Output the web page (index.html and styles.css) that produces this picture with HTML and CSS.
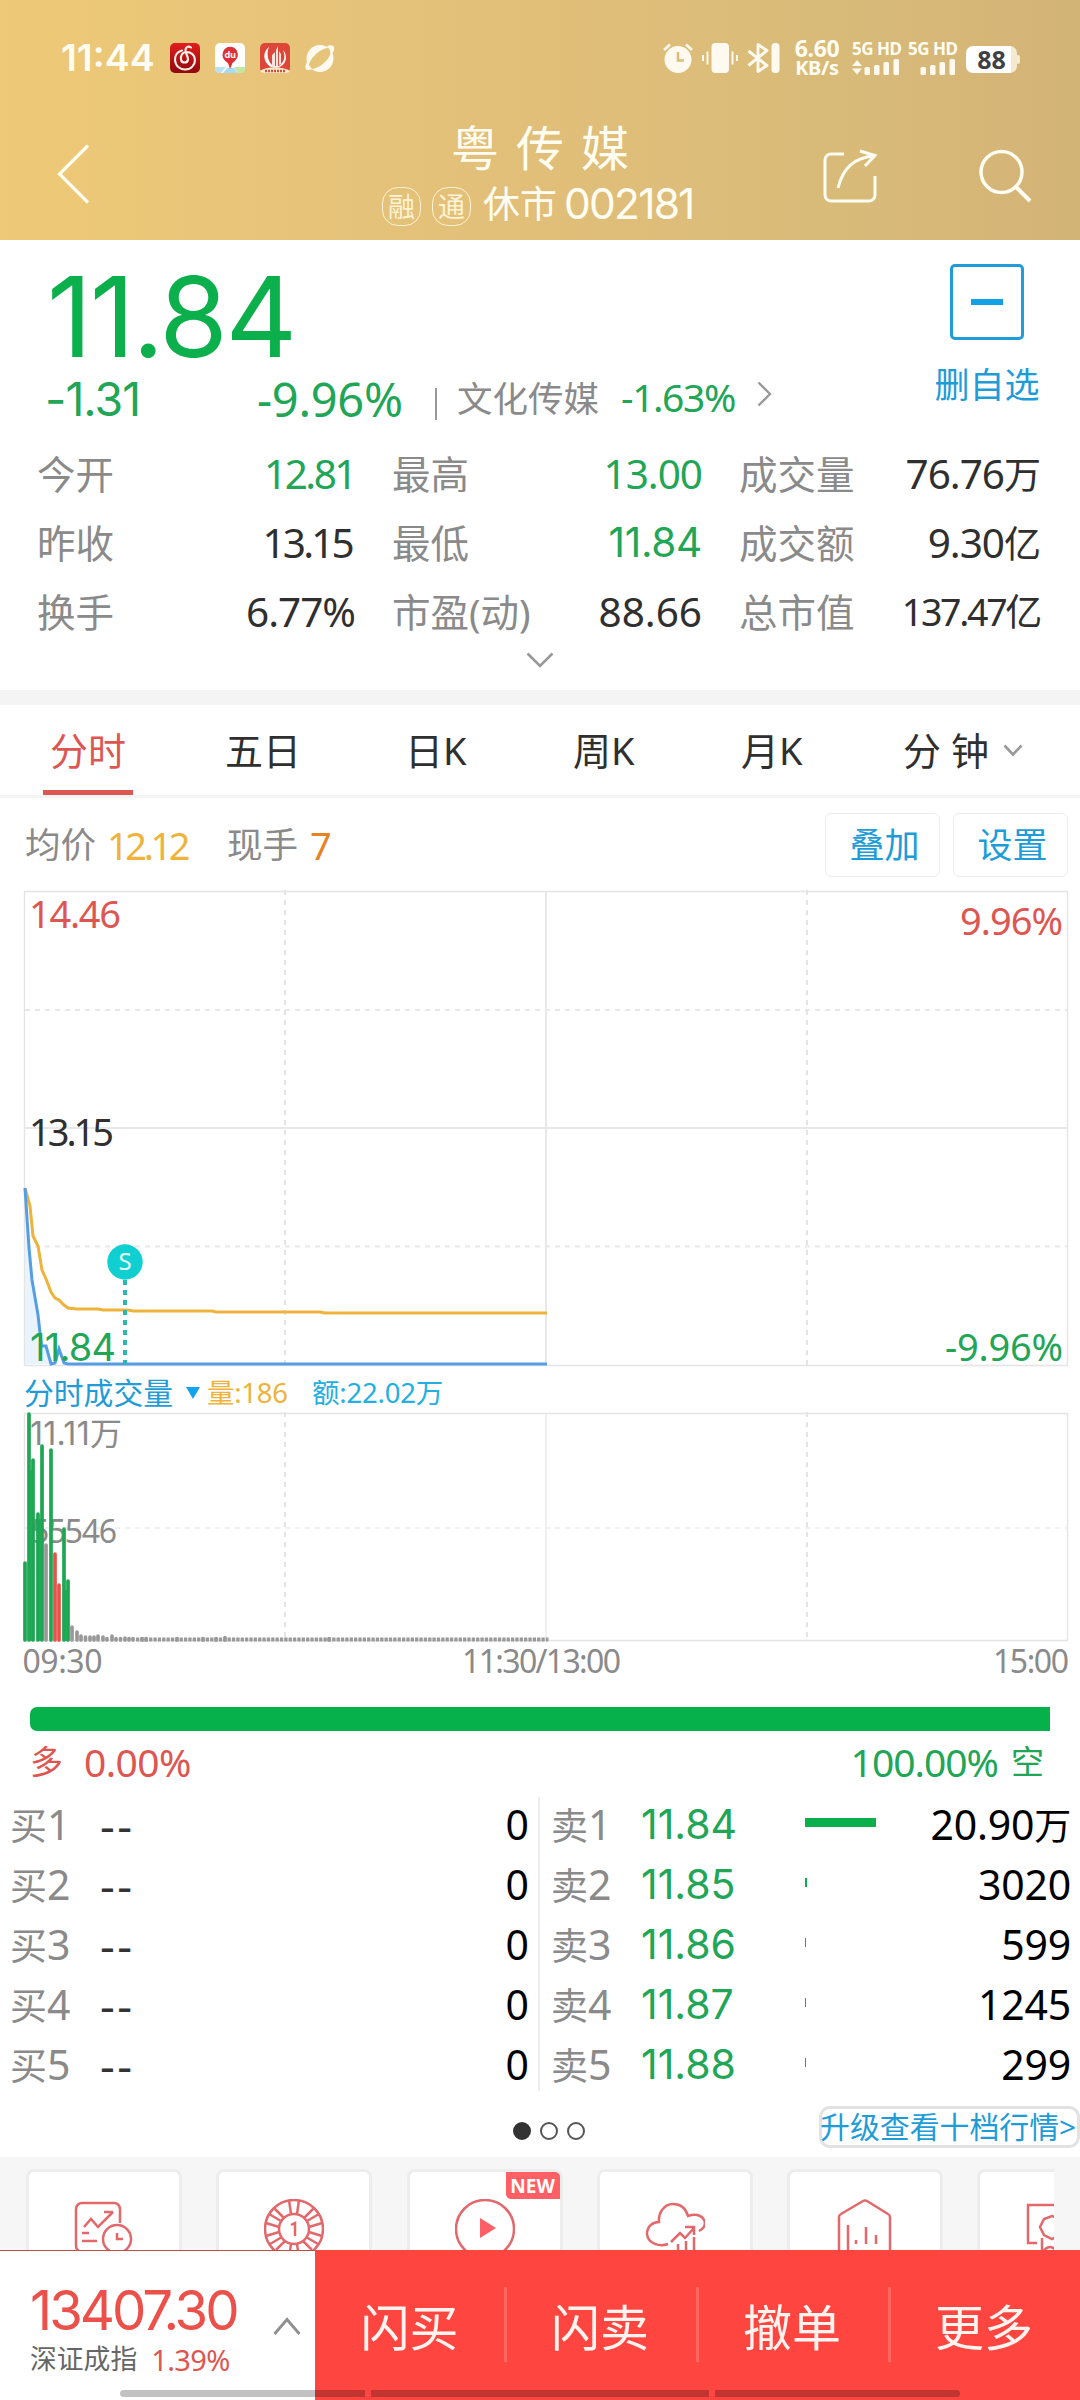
FILE: index.html
```html
<!DOCTYPE html>
<html lang="zh-CN">
<head>
<meta charset="utf-8">
<title>粤传媒 002181</title>
<link rel="stylesheet" href="styles.css">
</head>
<body>
<header class="header">
  <div class="status">
    <span class="clock">11:44</span>
    <svg class="app" viewBox="0 0 30 30"><defs><linearGradient id="nm" x1="0" y1="0" x2="0" y2="1"><stop offset="0" stop-color="#e31d1d"/><stop offset="1" stop-color="#8e0a0c"/></linearGradient></defs><rect width="30" height="30" rx="5" fill="url(#nm)"/><path d="M12 7.500C7 9 4.800 13 5 17c.4 6 5 9.500 10.200 9.500C21 26.500 25 22 25 17c0-5-4-8-8.500-8C12 9 10.500 13 11 16.500c.5 4 6.500 4 7 0 .2-3-3-7-2.500-10 .4-3 3.500-3.500 5.500-2" fill="none" stroke="#fff0ea" stroke-width="2.100" stroke-linecap="round"/></svg>
    <svg class="app" viewBox="0 0 30 30"><rect width="30" height="30" rx="5" fill="#fff"/><path d="M0 24h11l-5 6H4a4 4 0 0 1-4-4z" fill="#b9e1f1"/><path d="M19 24h11v2a4 4 0 0 1-4 4h-3z" fill="#c5e5a5"/><path d="M12 25h7l4 5H8z" fill="#a8dcf4"/><path d="M15 26l-2-6C9 17 7.500 15 7.500 11.500a7.700 7.700 0 0 1 15.400 0c0 3.500-2 5.500-5.400 8.500z" fill="#dd2f35"/><text x="15.200" y="14.500" text-anchor="middle" class="du">du</text></svg>
    <svg class="app" viewBox="0 0 30 30"><rect width="30" height="30" rx="5" fill="#dd4638"/><path d="M9 4C1 10 4 22 13 24.500h5C27 22 28 12 23 7c3 7 1 12-4 16h-6C8 19 6 11 9 4z" fill="#fff"/><path d="M12 24V12l3-3v15zM16 23V7l2-4v20zM19 22V8l2 3v10z" fill="#ffe4de"/><path d="M0 28c7-5 22-5 30 0a5 5 0 0 1-4 2H4a5 5 0 0 1-4-2z" fill="#fbe9c9"/><path d="M5 28h20" stroke="#cf5243" stroke-width="2.500" stroke-dasharray="2 1"/></svg>
    <svg class="app" viewBox="0 0 30 30"><circle cx="15" cy="15.500" r="13.500" fill="#fffaf0"/><path d="M2 23C2 10 14 3 25 5c3 0 3 3 2 4C25 22 15 28 5 26c-2 0-3-1-3-3z" fill="#fffaf0"/><ellipse cx="15" cy="15.500" rx="14" ry="6" transform="rotate(-42 15 15.500)" fill="#e6c47a"/><path d="M22 3c3-1 6-1 7 1 1 3-1 6-4 9 1-4 0-7-3-10zM3 18c-3 3-3 7-2 8 1 2 4 1 6 0-2-2-4-5-4-8z" fill="#fffaf0"/></svg>
    <span class="fill"></span>
    <svg class="s-alarm" viewBox="0 0 30 30"><path d="M1 7l6-5.500M29 7l-6-5.500" stroke="#fffaf0" stroke-width="2.600"/><circle cx="15" cy="16.500" r="13.500" fill="#fffaf0"/><path d="M15 9v8.500h6" fill="none" stroke="#dcbd7a" stroke-width="2.600"/></svg>
    <svg class="s-vib" viewBox="0 0 36 30"><rect x="9.500" width="17.500" height="30" rx="4" fill="#fffaf0"/><path d="M1 12v6M5.500 8.500v13M30.500 8.500v13M35 12v6" stroke="#fffaf0" stroke-width="2"/></svg>
    <svg class="s-bt" viewBox="0 0 33 30"><path d="M1.500 8L20 22.500l-9 6V1.500l9 6L1.500 22.500" fill="none" stroke="#fffaf0" stroke-width="2.900" stroke-linejoin="round"/><rect x="24.500" width="8" height="30" rx="3.500" fill="#fffaf0"/></svg>
    <span class="speed"><b>6.60</b><b>KB/s</b></span>
    <span class="sim"><b>5G HD</b><svg viewBox="0 0 47 16" width="47" height="16"><path d="M0 7l5-6 5 6zM0 9.500h10l-5 6z" fill="#fffaf0"/><g fill="#fffaf0"><rect x="12.500" y="8" width="5.500" height="8" rx="1.500"/><rect x="22" y="6" width="5.500" height="10" rx="1.500"/><rect x="31.500" y="3" width="5.500" height="13" rx="1.500"/><rect x="41.500" y="0" width="5.500" height="16" rx="1.500"/></g></svg></span>
    <span class="sim"><b>5G HD</b><svg viewBox="0 0 47 16" width="47" height="16"><g fill="#fffaf0"><rect x="12.500" y="8" width="5.500" height="8" rx="1.500"/><rect x="22" y="6" width="5.500" height="10" rx="1.500"/><rect x="31.500" y="3" width="5.500" height="13" rx="1.500"/><rect x="41.500" y="0" width="5.500" height="16" rx="1.500"/></g></svg></span>
    <span class="battery"><b>88</b></span>
  </div>
  <div class="nav">
    <svg class="back" viewBox="0 0 34 62"><path d="M31 2.500L2.500 31 31 59.500" fill="none" stroke="#fffdf2" stroke-width="3.200"/></svg>
    <div class="titles">
      <h1 class="title">粤传媒</h1>
      <div class="sub"><i class="badge">融</i><i class="badge">通</i><span class="rest">休市</span><span class="code">002181</span></div>
    </div>
    <svg class="share" viewBox="0 0 54 54"><path d="M21 5H8a6 6 0 0 0-6 6v35a6 6 0 0 0 6 6h38a6 6 0 0 0 6-6V27M15 39C20 18 32 8 52 7M37 2l15 4.500L42 17" fill="none" stroke="#fffdf2" stroke-width="3"/></svg>
    <svg class="search" viewBox="0 0 54 54"><circle cx="22.500" cy="23" r="20.500" fill="none" stroke="#fffdf2" stroke-width="3.500"/><path d="M37 38l14 14" stroke="#fffdf2" stroke-width="4"/></svg>
  </div>
</header>

<section class="quote">
  <div class="quote-top">
    <div class="quote-main">
      <div class="price">11.84</div>
      <div class="change"><span class="diff">-1.31</span><span class="pct">-9.96%</span><span class="bar"></span><span class="sector">文化传媒</span><span class="sector-pct">-1.63%</span>
        <svg class="chev-r" viewBox="0 0 15 26"><path d="M1.500 1.500L13 13 1.500 24.500" fill="none" stroke="#999" stroke-width="2.400"/></svg></div>
    </div>
    <div class="unfollow"><div class="minus"><span></span></div><div class="unfollow-text">删自选</div></div>
  </div>
  <div class="stats">
    <span class="k">今开</span><span class="v g one">12.81</span><span class="k">最高</span><span class="v g tight">13.00</span><span class="k">成交量</span><span class="v tight">76.76<em>万</em></span>
    <span class="k">昨收</span><span class="v one shift">13.15</span><span class="k">最低</span><span class="v g n">11.84</span><span class="k">成交额</span><span class="v tight">9.30<em>亿</em></span>
    <span class="k">换手</span><span class="v tight">6.77%</span><span class="k">市盈(动)</span><span class="v">88.66</span><span class="k">总市值</span><span class="v small">137.47<em>亿</em></span>
  </div>
  <svg class="expand" viewBox="0 0 28 16"><path d="M1.500 1.500L14 14 26.500 1.500" fill="none" stroke="#999" stroke-width="2.600"/></svg>
</section>

<nav class="tabs">
  <span class="tab active">分时</span><span class="tab t2">五日</span><span class="tab t3">日K</span><span class="tab t4">周K</span><span class="tab t5">月K</span><span class="tab t6">分 钟</span>
  <svg class="tab-chev" viewBox="0 0 20 13"><path d="M1.500 1.500L10 10.500 18.500 1.500" fill="none" stroke="#9a9a9a" stroke-width="2.600"/></svg>
</nav>

<div class="info">
  <span class="lab">均价</span><span class="avg">12.12</span><span class="lab l2">现手</span><span class="hand">7</span>
  <span class="fill"></span>
  <span class="btn">叠加</span><span class="btn">设置</span>
</div>

<svg class="chart" viewBox="0 890 1080 476" width="1080" height="476">
  <g fill="none" stroke="#e4e4e4">
    <path d="M24.500 891.500H1067.500V1365.500H24.500z" stroke-width="1.400"/>
    <path d="M24 1128H1067M546 892V1365" stroke="#e8e8e8" stroke-width="2"/>
    <path d="M25 1010H1067M25 1246.500H1067" stroke="#e8e8e8" stroke-width="2" stroke-dasharray="5 5"/>
    <path d="M285 890V1365M807 890V1365" stroke-width="2" stroke-dasharray="5 5"/>
  </g>
  <path d="M25 1188L29 1248 32 1280 38 1315 41.500 1346 46 1346 51 1364H25z" fill="#e8f3fc"/>
  <path d="M25 1188L30 1206 33 1236 38 1246 42 1270 46 1279 51 1292 55 1298 59 1300 64 1305 68 1308 77 1309H98L103 1310H128L133 1311H212L216 1312H320L325 1313H547" fill="none" stroke="#edb33b" stroke-width="3"/>
  <path d="M25 1188L29 1248 32 1280 38 1315 41.500 1346 46 1346 51 1364 55 1363 59 1349 64 1363 68 1364H547" fill="none" stroke="#559ee3" stroke-width="3"/>
  <path d="M125 1280V1364" stroke="#2cb5b5" stroke-width="4" stroke-dasharray="5 5"/>
  <circle cx="125" cy="1262" r="17.700" fill="#0fcfd0"/>
  <text x="125" y="1270" text-anchor="middle" class="sell">S</text>
  <text x="29" y="928" class="ct red" textLength="92" lengthAdjust="spacing">14.46</text>
  <text x="960" y="935" class="ct red" textLength="103" lengthAdjust="spacing">9.96%</text>
  <text x="29" y="1146" class="ct" textLength="85" lengthAdjust="spacing">13.15</text>
  <text x="30" y="1361" class="ct grn n" textLength="86" lengthAdjust="spacing">11.84</text>
  <text x="945" y="1361" class="ct grn" textLength="118" lengthAdjust="spacing">-9.96%</text>
</svg>

<div class="vol-head"><span class="vh1">分时成交量</span><svg class="tri" viewBox="0 0 14 12"><path d="M0 0H14L7 12z" fill="#12a2ee"/></svg><span class="vh2">量:186</span><span class="vh3">额:22.02万</span></div>

<svg class="volume" viewBox="0 1412 1080 268" width="1080" height="268">
  <g fill="none" stroke="#e4e4e4">
    <path d="M24.500 1413.500H1067.500V1640.500H24.500z" stroke-width="1.400"/>
    <path d="M546 1414V1640" stroke="#f0f0f0" stroke-width="2"/>
    <path d="M25 1528H1067" stroke="#f0f0f0" stroke-width="2" stroke-dasharray="5 5"/>
    <path d="M285 1412V1640M807 1412V1640" stroke-width="2" stroke-dasharray="5 5"/>
  </g>
  <g class="ax">
    <text x="30" y="1445" textLength="92" class="v1">11.11万</text>
    <text x="31" y="1543" textLength="86" class="v2">55546</text>
  </g>
  <path d="M29 1470H33V1641H29zM38 1520H42V1641H38zM64 1590H68V1641H64z" fill="#31c473"/>
  <g stroke-width="3.700" stroke-linecap="round" fill="none">
    <path stroke="#1da653" d="M25 1563V1640M29 1414V1640M33 1460V1640M38 1514V1640M42 1446V1640M51 1450V1640M64 1529V1640M68 1581V1640"/>
    <path stroke="#999" d="M46 1545V1640M72 1627V1640M77 1632V1640M81 1636V1640M85.500 1637V1640M90 1637V1640M94 1637V1640M98 1636V1640M103 1637V1640M107 1638.500V1640M112 1636V1640M116 1638.500V1640M120.500 1638.500V1640M125 1638V1640M129 1638.500V1640M133 1638.500V1640M142 1638.500V1640M146 1638.500V1640M177 1638.500V1640M203 1638.500V1640M216 1638.500V1640M225 1637.500V1640M329 1638.500V1640"/>
    <path stroke="#e9524b" d="M55 1554V1640M59 1585V1640"/>
  </g>
  <path d="M136 1639.500H548.500" stroke="#999" stroke-width="3.800" stroke-dasharray="3.300 1.060" fill="none"/>
  <g class="ax">
    <text x="22.500" y="1673" textLength="80" class="t">09:30</text>
    <text x="462" y="1673" textLength="159" class="t">11:30/13:00</text>
    <text x="993" y="1673" textLength="76" class="t">15:00</text>
  </g>
</svg>

<div class="ratio"><div class="ratio-bar"></div>
  <div class="ratio-text"><span class="long"><em>多</em><span>0.00%</span></span><span class="short"><span>100.00%</span><em>空</em></span></div>
</div>

<section class="book">
  <div class="side buy">
    <div class="row"><span class="lv"><em>买</em>1</span><span class="dash">--</span><span class="qty">0</span></div>
    <div class="row"><span class="lv"><em>买</em>2</span><span class="dash">--</span><span class="qty">0</span></div>
    <div class="row"><span class="lv"><em>买</em>3</span><span class="dash">--</span><span class="qty">0</span></div>
    <div class="row"><span class="lv"><em>买</em>4</span><span class="dash">--</span><span class="qty">0</span></div>
    <div class="row"><span class="lv"><em>买</em>5</span><span class="dash">--</span><span class="qty">0</span></div>
  </div>
  <div class="side ask">
    <div class="row"><span class="lv"><em>卖</em>1</span><span class="p">11.84</span><i class="depth" style="width:71px"></i><span class="qty">20.90<em>万</em></span></div>
    <div class="row"><span class="lv"><em>卖</em>2</span><span class="p">11.85</span><i class="depth" style="width:2px"></i><span class="qty">3020</span></div>
    <div class="row"><span class="lv"><em>卖</em>3</span><span class="p">11.86</span><i class="depth" style="width:1px"></i><span class="qty">599</span></div>
    <div class="row"><span class="lv"><em>卖</em>4</span><span class="p">11.87</span><i class="depth" style="width:1px"></i><span class="qty">1245</span></div>
    <div class="row"><span class="lv"><em>卖</em>5</span><span class="p">11.88</span><i class="depth" style="width:1px"></i><span class="qty">299</span></div>
  </div>
</section>
<div class="pager"><span class="dots"><i class="on"></i><i></i><i></i></span><span class="upgrade">升级查看十档行情&gt;</span></div>

<section class="cards">
  <div class="card"><svg viewBox="0 0 60 60"><path d="M46 24V10a6 6 0 0 0-6-6H8a6 6 0 0 0-6 6v37a6 6 0 0 0 6 6h26M10 28l7-8 7 8 15-15M30 13h9M8 34h7M8 42h15"/><circle cx="43" cy="40" r="14"/><path d="M43 34v6h6"/></svg></div>
  <div class="card"><svg viewBox="0 0 60 60"><circle cx="30" cy="30" r="29"/><circle cx="30" cy="30" r="15"/><path d="M27 15L25 1M33 15l2-14M20 19L10 9M17 22L5 15M15 28L2 24M15 33L2 37M18 38L6 45M21 42l-9 9M27 45l-2 14M33 45l2 14M40 19l10-10M43 22l12-7M45 28l13-4M45 33l13 4M42 38l12 7M39 42l9 9M27 26l4-2v13"/></svg></div>
  <div class="card"><svg viewBox="0 0 60 60"><circle cx="30" cy="30" r="29"/><path class="solid" d="M25 19l16 10-16 10z"/></svg><b class="new">NEW</b></div>
  <div class="card"><svg viewBox="0 0 60 60"><path d="M23 45c-8 3-20 0-21-10 0-8 6-12 12-12C13 14 19 5 28 5c8 0 13 5 15 12 9-3 16 0 17 7 0 3-2 6-6 8M26 43l9-9 5 5 9-10M40 28h9v8M33 45v14M41 42v17M49 38v21"/></svg></div>
  <div class="card"><svg viewBox="0 0 60 60"><path d="M4 59V18Q4 16 6 15L28 2Q30 1 32 2L53 15Q55 16 55 18V59M13 26v33M21 41v4M31 28v17M41 36v9"/></svg></div>
  <div class="card last"><svg viewBox="0 0 60 60"><path d="M12 44H3V6H58M17 39v20M17 54q8-12 16 0"/><path d="M27 17l8 3 3 8-3 8-8 4-8-4-4-8 4-8z"/></svg></div>
</section>

<footer class="footer">
  <div class="index">
    <div class="index-l"><div class="index-v">13407.30</div><div class="index-n"><span>深证成指</span><span class="ip">1.39%</span></div></div>
    <svg class="chev-up" viewBox="0 0 28 18"><path d="M1.500 17L14 2.500 26.500 17" fill="none" stroke="#8f8f8f" stroke-width="2.800"/></svg>
  </div>
  <div class="act">闪买</div><div class="act">闪卖</div><div class="act">撤单</div><div class="act">更多</div>
  <div class="home"><i></i><i></i><i></i></div>
</footer>
</body>
</html>
```
FILE: styles.css
```css
* { box-sizing: border-box; }
html, body { margin: 0; }
body {
  width: 1080px; height: 2400px; overflow: hidden; background: #fff; color: #2f2f2f;
  font-family: "Noto Sans", "Noto Sans CJK SC", sans-serif; line-height: 1;
  display: flex; flex-direction: column;
}
body > * { flex: none; }
em, i { font-style: normal; }
svg { display: block; flex: none; }
span, em { white-space: nowrap; }
.fill { flex: 1; }
.n, .price, .diff, .code, .p, .index-v, .clock, .v1 { font-family: Inter, "Noto Sans CJK SC", sans-serif; }

.header { height: 240px; background: linear-gradient(90deg, #eec976 0, #e8c579 20%, #e1bf79 50%, #d9bb79 75%, #d3b477 100%); color: #fffdf2; }
.status { height: 116px; padding: 0 60px; display: flex; align-items: center; }
.clock { width: 109px; margin-left: 1px; font-size: 37.500px; font-weight: 600; }
.app { width: 30px; height: 30px; margin-right: 15px; }
.du { font: 700 9px Inter, sans-serif; fill: #fff; }
.s-alarm { width: 30px; height: 30px; margin-right: 9px; }
.s-vib { width: 36px; height: 30px; margin-right: 9px; }
.s-bt { width: 33px; height: 30px; }
.speed { width: 50px; margin: 0 10px 0 12px; display: flex; flex-direction: column; align-items: center; font-size: 20px; line-height: 19px; }
.speed b { font-weight: 700; letter-spacing: -.3px; }
.speed b:first-child { font-size: 23px; }
.sim { width: 48px; margin-right: 8px; display: flex; flex-direction: column; gap: 3px; font-size: 17px; line-height: 14px; letter-spacing: -.5px; }
.sim b { font-weight: 700; }
.battery { position: relative; width: 51px; height: 27px; margin: 3px 3px 0 2px; border-radius: 7px; background: linear-gradient(90deg, #fff 88%, #f5e9cf 88%); color: #3f4044; display: grid; place-items: center; font-size: 25px; line-height: 25px; }
.battery::after { content: ""; position: absolute; right: -3px; top: 9px; width: 4px; height: 9px; border-radius: 2px; background: #f5e9cf; }
.nav { height: 124px; display: flex; }
.back { width: 34px; height: 62px; margin: 27px 0 0 57px; }
.titles { width: 340px; margin-left: 280px; }
.title { margin: 8px 0 0 80px; font-size: 48px; font-weight: 400; letter-spacing: 17px; line-height: 48px; white-space: nowrap; }
.sub { display: flex; align-items: center; height: 44px; margin: 9px 0 0 11px; }
.badge { width: 39px; height: 39px; margin: 6px 11px 0 0; border: 1.500px solid #fdf3d4; border-radius: 16px; display: grid; place-items: center; font-size: 27px; line-height: 27px; color: #fdf3d4; }
.rest { width: 82px; padding-left: 1px; font-size: 37px; }
.code { font-size: 42.500px; letter-spacing: -1.800px; padding-top: 2px; }
.share { width: 54px; height: 54px; margin: 33px 0 0 112px; }
.search { width: 54px; height: 54px; margin: 33px 0 0 102px; }

.quote { height: 465px; border-bottom: 15px solid #f4f4f4; }
.quote-top { height: 200px; display: flex; }
.quote-main { width: 900px; }
.price { height: 110px; margin: 22px 0 0 47px; line-height: 110px; font-size: 111px; color: #0bb04c; letter-spacing: -2.500px; }
.change { display: flex; align-items: center; height: 50px; padding-left: 45px; margin-top: 2px; color: #21a556; }
.diff { width: 212px; font-size: 46.500px; letter-spacing: -1px; }
.pct { width: 178px; font-size: 47px; letter-spacing: -.3px; }
.bar { width: 2px; height: 32px; margin-top: 9px; background: #999; }
.sector { width: 164px; margin-left: 20px; margin-top: -1px; font-size: 35.500px; color: #8a8a8a; }
.sector-pct { width: 136px; font-size: 39px; letter-spacing: -1.400px; margin-top: -6px; }
.chev-r { width: 15px; height: 26px; margin-bottom: 10px; }
.unfollow { width: 174px; padding-top: 24px; display: flex; flex-direction: column; align-items: center; }
.minus { width: 74px; height: 76px; border: 3px solid #209cd8; border-radius: 5px; display: grid; place-items: center; }
.minus span { width: 32px; height: 6px; background: #12a0e6; }
.unfollow-text { margin-top: 27px; font-size: 35px; color: #1d9cd7; }
.stats { height: 207px; padding: 0 40px 0 37px; display: grid; grid-template: repeat(3, 69px) / 120px 198px 157px 190px 141px 197px; align-items: center; }
.stats span { margin-top: -1px; }
.stats .k { font-size: 38.500px; color: #8a8a8a; }
.stats .k:nth-child(6n+3), .stats .k:nth-child(6n+5) { margin-left: 37px; }
.stats .v { font-size: 40.500px; text-align: right; }
.stats .tight { letter-spacing: -1px; }
.stats .one { letter-spacing: -2.500px; }
.stats .shift { padding-right: 3px; letter-spacing: -2.800px; }
.stats .n { font-size: 40.500px; letter-spacing: -.3px; }
.stats .v em { font-size: 37px; }
.stats .small { font-size: 37.500px; letter-spacing: -2.300px; }
.g { color: #21a556; }
.expand { width: 28px; height: 16px; margin: 5px auto 0; }

.tabs { height: 93px; border-bottom: 3px solid #f3f3f3; display: flex; align-items: center; font-size: 38px; }
.tab { height: 90px; line-height: 91px; }
.active { width: 90px; margin-left: 43px; text-align: center; color: #dd5651; border-bottom: 5px solid #dd5651; }
.t2 { margin-left: 92px; width: 180px; }
.t3 { width: 168px; }
.t4 { width: 168px; }
.t5 { width: 162px; }
.t6 { width: 100px; }
.tab-chev { width: 20px; height: 13px; }

.info { height: 92px; padding: 1px 12px 0 25px; display: flex; align-items: center; }
.lab { width: 82px; font-size: 35.500px; color: #8a8a8a; }
.avg { width: 120px; font-size: 38px; letter-spacing: -3.400px; color: #edb33b; }
.hand { font-size: 38px; padding-left: 1px; color: #e58427; }
.btn { width: 115px; height: 64px; margin-left: 13px; padding-left: 4px; border: 1.500px solid #ececec; border-radius: 6px; display: grid; place-items: center; font-size: 35px; color: #1d9cd7; }

.chart, .volume { overflow: visible; }
.ct { font-size: 38px; fill: #2f2f2f; }
.ct.red { fill: #dd5651; }
.ct.grn { fill: #21a556; }
.sell { font-size: 24px; fill: #e4fdfd; }
.ax { fill: #8a8a8a; }
.v1, .v2, .t { font-size: 32px; }
.vol-head { height: 46px; padding: 7px 0 0 24px; display: flex; align-items: center; color: #219cd6; }
.vh1 { width: 162px; font-size: 29.800px; }
.tri { width: 14px; height: 12px; margin-right: 7px; }
.vh2 { width: 105px; font-size: 27.500px; letter-spacing: -.3px; color: #edb33b; }
.vh3 { font-size: 27.500px; letter-spacing: -.2px; color: #23afe0; }

.ratio { height: 117px; padding: 27px 30px 0; }
.ratio-bar { height: 24px; background: #06b14c; border-radius: 7px 0 0 7px; }
.ratio-text { height: 61px; display: flex; justify-content: space-between; align-items: center; font-size: 39px; }
.ratio-text em { font-size: 33px; }
.long, .short { display: flex; align-items: center; letter-spacing: -.6px; }
.long { color: #dd5651; }
.long em { width: 54px; }
.short { color: #21a556; gap: 13px; padding-right: 7px; letter-spacing: -1px; }

.book { height: 294px; display: flex; }
.side { width: 540px; }
.buy { border-right: 2px solid #ececec; }
.row { height: 60px; display: flex; align-items: center; font-size: 41px; }
.side .row:first-child { margin-top: -3px; }
.lv { color: #8a8a8a; width: 90px; margin-left: 11px; }
.buy .lv { margin-left: 10px; }
.lv em { font-size: 37px; }
.dash { color: #333; font-size: 46px; letter-spacing: 2.500px; line-height: 40px; }
.qty { margin-left: auto; color: #000; }
.buy .qty { padding-right: 9px; }
.p { width: 164px; font-size: 41px; color: #21a556; }
.depth { height: 9px; background: #0bb04c; margin-top: -3px; flex: none; }
.ask .qty { padding-right: 9px; letter-spacing: -.2px; }
.qty em { font-size: 37px; }
.pager { height: 66px; display: flex; align-items: flex-start; justify-content: flex-end; padding-top: 15px; }
.dots { display: flex; gap: 9px; width: 306px; padding-top: 16px; }
.dots i { width: 18px; height: 18px; border: 2px solid #555; border-radius: 50%; }
.dots .on { background: #333; border-color: #333; }
.upgrade { width: 261px; height: 42px; border: 3px solid #e2e2e2; border-radius: 11px; font-size: 29.900px; line-height: 36px; text-indent: -2px; color: #1d9cd7; }

.cards { height: 93px; padding: 12px 26px 0; background: #f6f6f6; display: flex; gap: 34.300px; overflow: hidden; }
.card { position: relative; flex: none; width: 156px; height: 180px; border: 3px solid #ededed; border-radius: 8px; background: #fff; }
.card svg { width: 60px; height: 60px; margin: 27px 0 0 45px; fill: none; stroke: #e3686b; stroke-width: 2.500; }
.card .solid { fill: #ff6067; stroke: none; }
.card.last { width: 77px; border-right: 0; border-radius: 8px 0 0 0; overflow: hidden; }
.new { position: absolute; top: 0; right: 0; width: 54px; height: 27px; border-radius: 0 5px 0 5px; background: #ff5f65; color: #fff; font-size: 19px; line-height: 28px; text-align: center; }

.footer { position: relative; height: 150px; display: flex; background: #ff4540; }
.index { width: 315px; background: #fff; border-top: 1px solid #b9504e; display: flex; align-items: center; }
.index-l { width: 273px; padding: 7px 0 0 30px; }
.index-v { font-size: 54.500px; letter-spacing: -3px; color: #ec504a; }
.index-n { margin-top: 7px; display: flex; align-items: center; height: 30px; font-size: 26.800px; color: #666; }
.ip { margin-left: 14px; font-size: 29px; letter-spacing: -.6px; color: #dd5651; }
.chev-up { width: 28px; height: 18px; }
.act { width: 192px; display: flex; align-items: center; justify-content: center; padding-top: 5px; font-size: 49px; color: #fff3f0; }
.act:nth-child(2) { width: 189px; }
.act + .act { background: linear-gradient(#ff6660, #ff6660) 0 37px / 3px 75px no-repeat; }
.home { position: absolute; left: 120px; bottom: 3px; width: 840px; height: 7px; display: flex; gap: 6px; border-radius: 4px; overflow: hidden; }
.home i { background: rgba(0, 0, 0, .24); flex: 0 0 245px; }
.home i:nth-child(2) { flex-basis: 338px; }
.home i:nth-child(3) { flex: 1; }
```
